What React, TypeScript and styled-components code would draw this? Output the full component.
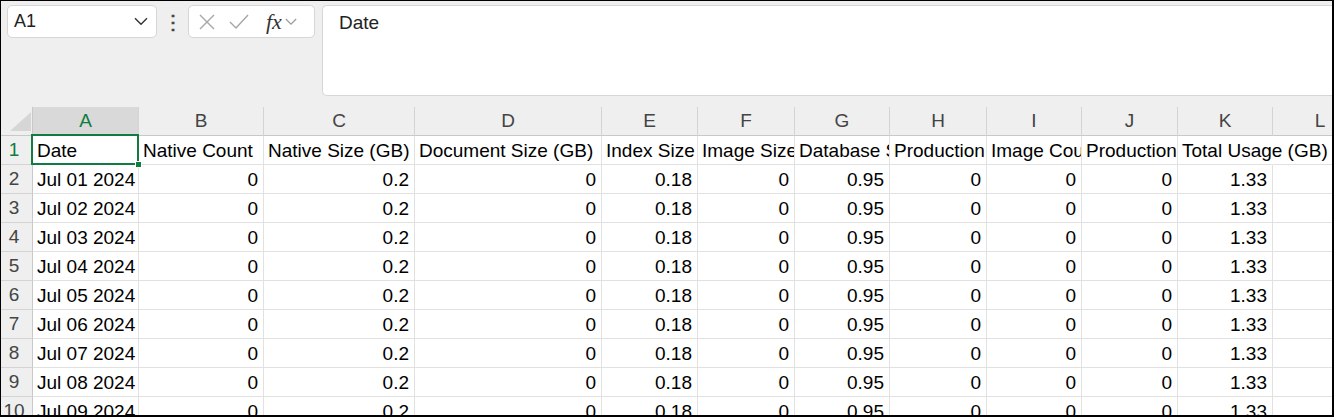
import React from "react";
import styled, { createGlobalStyle } from "styled-components";

const GlobalStyle = createGlobalStyle`
  html, body {
    margin: 0;
    padding: 0;
    background: #ffffff;
  }
  * {
    box-sizing: border-box;
  }
`;

const columnWidths = [106, 125, 151, 187, 96, 97, 95, 97, 95, 96, 95, 95];
const letters = ["A", "B", "C", "D", "E", "F", "G", "H", "I", "J", "K", "L"];
const headers = [
  "Date",
  "Native Count",
  "Native Size (GB)",
  "Document Size (GB)",
  "Index Size (GB)",
  "Image Size (GB)",
  "Database Size (GB)",
  "Production Size (GB)",
  "Image Count",
  "Production Count",
  "Total Usage (GB)",
  "",
];
const values = ["0", "0.2", "0", "0.18", "0", "0.95", "0", "0", "0", "1.33"];

const Frame = styled.div`
  width: 1334px;
  height: 417px;
  border-style: solid;
  border-color: #000;
  border-width: 1px 2px 2px 1px;
  background: #efefef;
  overflow: hidden;
  display: flex;
  flex-direction: column;
  font-family: "Liberation Sans", Arial, sans-serif;
`;

const Toolbar = styled.div`
  height: 106px;
  flex-shrink: 0;
  display: flex;
  align-items: flex-start;
  padding: 4px 0 0 6px;
`;

const NameBox = styled.div`
  width: 150px;
  height: 33px;
  background: #fff;
  border: 1px solid #d6d6d6;
  border-radius: 5px;
  display: flex;
  align-items: center;
  justify-content: space-between;
  padding: 0 8px 0 6px;
  font-size: 18px;
  color: #222;
`;

const Dots = styled.div`
  width: 31px;
  height: 33px;
  display: flex;
  align-items: center;
  justify-content: center;
  font-size: 20px;
  font-weight: bold;
  color: #444;
`;

const FxBox = styled.div`
  width: 127px;
  height: 33px;
  background: #fff;
  border: 1px solid #d6d6d6;
  border-radius: 5px;
  display: flex;
  align-items: center;
  padding: 0 4px 0 9px;
  gap: 12px;
`;

const Fx = styled.span`
  font-family: "Liberation Serif", "Times New Roman", serif;
  font-style: italic;
  font-size: 22px;
  color: #333;
  margin-left: 4px;
  margin-right: -9px;
`;

const FormulaBox = styled.div`
  margin-left: 7px;
  flex: 1;
  height: 91px;
  background: #fff;
  border: 1px solid #d6d6d6;
  border-right: none;
  border-radius: 5px 0 0 5px;
  padding: 6px 16px;
  font-size: 19px;
  color: #222;
`;

const Grid = styled.div`
  display: grid;
  grid-template-columns: 32px ${columnWidths.map((w) => `${w}px`).join(" ")};
  grid-auto-rows: 29px;
  background: #fff;
  width: max-content;
`;

const Corner = styled.div`
  position: relative;
  background: #efefef;
  border-right: 1px solid #c8c8c8;
  border-bottom: 1px solid #c8c8c8;
  & > svg {
    position: absolute;
    right: 1px;
    bottom: 4px;
  }
`;

const ColHeader = styled.div<{ $selected?: boolean }>`
  background: ${(p) => (p.$selected ? "#d9d9d9" : "#efefef")};
  color: ${(p) => (p.$selected ? "#107c41" : "#444")};
  border-right: 1px solid #d4d4d4;
  border-bottom: ${(p) =>
    p.$selected ? "2px solid #107c41" : "1px solid #c8c8c8"};
  display: flex;
  align-items: center;
  justify-content: center;
  font-size: 19px;
`;

const RowHeader = styled.div<{ $selected?: boolean }>`
  background: #efefef;
  color: ${(p) => (p.$selected ? "#107c41" : "#444")};
  border-right: 1px solid #c8c8c8;
  border-bottom: 1px solid #d4d4d4;
  display: flex;
  align-items: center;
  justify-content: center;
  font-size: 19px;
  padding-right: 5px;
`;

const Cell = styled.div<{ $right?: boolean; $spill?: boolean; $active?: boolean }>`
  position: relative;
  border-right: ${(p) => (p.$spill ? "1px solid transparent" : "1px solid #e1e1e1")};
  border-bottom: 1px solid #e1e1e1;
  display: flex;
  align-items: center;
  justify-content: ${(p) => (p.$right ? "flex-end" : "flex-start")};
  padding: 2px 5px 0 4px;
  font-size: 19px;
  color: #000;
  white-space: nowrap;
  overflow: ${(p) => (p.$spill || p.$active ? "visible" : "hidden")};
  z-index: ${(p) => (p.$active ? 5 : p.$spill ? 2 : 1)};
`;

const Selection = styled.div`
  position: absolute;
  left: -2px;
  top: -2px;
  right: -1px;
  bottom: -1px;
  border: 2px solid #107c41;
  pointer-events: none;
`;

const FillHandle = styled.div`
  position: absolute;
  right: -5px;
  bottom: -5px;
  width: 7px;
  height: 7px;
  background: #107c41;
  border: 1px solid #fff;
`;

function Chevron({ color, size }: { color: string; size: number }) {
  return (
    <svg width={size} height={size * 0.6} viewBox="0 0 14 8">
      <path d="M1 1 L7 7 L13 1" fill="none" stroke={color} strokeWidth="1.4" />
    </svg>
  );
}

export default function App() {
  const dataRows = Array.from({ length: 10 }, (_, i) => i);

  return (
    <>
      <GlobalStyle />
      <Frame>
        <Toolbar>
          <NameBox>
            <span>A1</span>
            <Chevron color="#333" size={14} />
          </NameBox>
          <Dots>⋮</Dots>
          <FxBox>
            <svg width="18" height="18" viewBox="0 0 18 18">
              <path d="M2 2 L16 16 M16 2 L2 16" stroke="#a6a6a6" strokeWidth="1.4" />
            </svg>
            <svg width="22" height="18" viewBox="0 0 22 18">
              <path d="M2 9 L8 15 L20 2" fill="none" stroke="#a6a6a6" strokeWidth="1.4" />
            </svg>
            <Fx>fx</Fx>
            <Chevron color="#9a9a9a" size={12} />
          </FxBox>
          <FormulaBox>Date</FormulaBox>
        </Toolbar>

        <Grid>
          <Corner>
            <svg width="21" height="19" viewBox="0 0 21 19">
              <polygon points="21,0 21,19 0,19" fill="#d6d6d6" />
            </svg>
          </Corner>
          {letters.map((l, i) => (
            <ColHeader key={l} $selected={i === 0}>
              {l}
            </ColHeader>
          ))}

          <RowHeader $selected>1</RowHeader>
          {headers.map((h, i) => (
            <Cell key={`h${i}`} $spill={i === 10} $active={i === 0}>
              {h}
              {i === 0 && (
                <Selection>
                  <FillHandle />
                </Selection>
              )}
            </Cell>
          ))}

          {dataRows.map((r) => (
            <React.Fragment key={r}>
              <RowHeader>{r + 2}</RowHeader>
              <Cell>{`Jul ${String(r + 1).padStart(2, "0")} 2024`}</Cell>
              {values.map((v, i) => (
                <Cell key={i} $right>
                  {v}
                </Cell>
              ))}
              <Cell />
            </React.Fragment>
          ))}
        </Grid>
      </Frame>
    </>
  );
}
